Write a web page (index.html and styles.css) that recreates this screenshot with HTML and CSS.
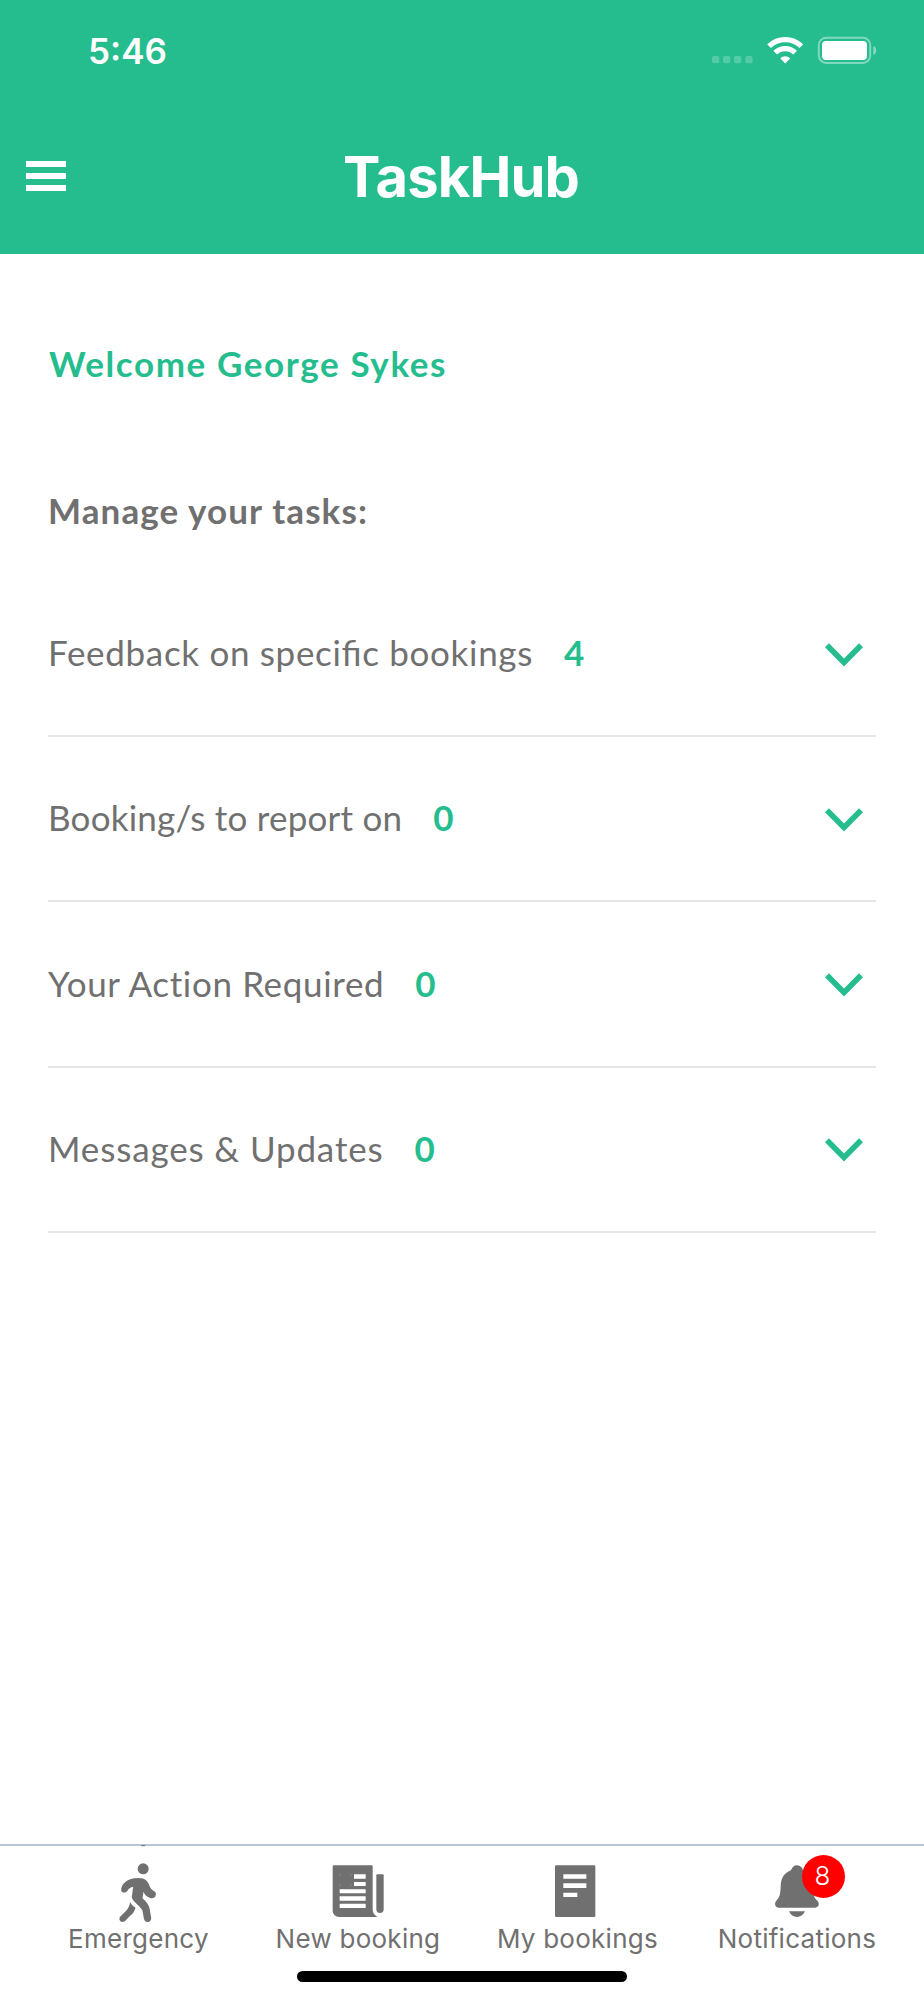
FILE: index.html
```html
<!DOCTYPE html>
<html lang="en">
<head>
<meta charset="utf-8">
<title>TaskHub</title>
<link rel="stylesheet" href="styles.css">
</head>
<body>
<div class="screen">
  <header class="header">
    <div class="status">
      <span class="time">5:46</span>
      <svg class="status-icons" width="166" height="30" viewBox="0 0 166 30">
        <g fill="#fff" fill-opacity=".22">
          <rect x="1" y="20" width="7.3" height="7.3" rx="2"/><rect x="12" y="20" width="7.3" height="7.3" rx="2"/><rect x="23" y="20" width="7.3" height="7.3" rx="2"/><rect x="34.3" y="20" width="7.3" height="7.3" rx="2"/>
        </g>
        <g fill="none" stroke="#fff" stroke-width="5.2">
          <path d="M58 10.2C67 1.3 81.3 1.3 90.4 10.2"/>
          <path d="M64.2 16.6C69.9 11.2 78.5 11.2 84.2 16.6"/>
        </g>
        <path d="M74.2 27.5L69.3 22.5C72 19.4 76.4 19.4 79.2 22.5Z" fill="#fff"/>
        <rect x="107.8" y="1.7" width="51.4" height="25.2" rx="7.5" fill="none" stroke="#fff" stroke-opacity=".42" stroke-width="2"/>
        <rect x="111" y="4.9" width="45" height="19" rx="4" fill="#fff"/>
        <path d="M162.3 10C166.2 11.6 166.2 17.2 162.3 18.8Z" fill="#fff" fill-opacity=".45"/>
      </svg>
    </div>
    <div class="bar">
      <button class="menu" aria-label="Menu"><i></i><i></i><i></i></button>
      <h1 class="title">TaskHub</h1>
    </div>
  </header>
  <main class="content">
    <p class="welcome">Welcome George Sykes</p>
    <h2 class="manage">Manage your tasks:</h2>
    <ul class="tasks">
      <li class="task"><span class="label feedback">Feedback on specific bookings</span><b class="count">4</b><svg class="chev" width="38" height="24" viewBox="0 0 38 24"><path d="M2 2.2L19 19.4L36 2.2"/></svg></li>
      <li class="task"><span class="label reports">Booking/s to report on</span><b class="count">0</b><svg class="chev" width="38" height="24" viewBox="0 0 38 24"><path d="M2 2.2L19 19.4L36 2.2"/></svg></li>
      <li class="task"><span class="label actions">Your Action Required</span><b class="count">0</b><svg class="chev" width="38" height="24" viewBox="0 0 38 24"><path d="M2 2.2L19 19.4L36 2.2"/></svg></li>
      <li class="task"><span class="label messages">Messages &amp; Updates</span><b class="count">0</b><svg class="chev" width="38" height="24" viewBox="0 0 38 24"><path d="M2 2.2L19 19.4L36 2.2"/></svg></li>
    </ul>
  </main>
  <nav class="tabs">
    <a class="tab">
      <svg class="icon" viewBox="205.5 80 180 198">
        <path d="M305 44.500h12v3h-12z"/>
        <circle cx="311" cy="115.500" r="16.500"/>
        <path d="M245 178C245 163 262 143 297 143C316 143 324 152 328 162C332 172 334 178 343 182C349 185 351 190 348 197C345 204 338 205 330 202C322 198 315 193 312 184L309 204C322 216 329 224 331 238L335 262C336 270 330 275 324 275C317 275 314 270 313 264L309 241C306 233 287 218 279 207C276 202 277 198 278 192L281 169C270 171 267 176 264 181C258 190 245 188 245 178Z"/>
        <path d="M272 215C275 222 281 228 288 232C285 243 280 250 272 256L259 270C253 277 243 276 240 268C239 263 241 259 245 256L260 241C267 234 270 226 272 215Z"/>
      </svg>
      <span class="name">Emergency</span>
    </a>
    <a class="tab">
      <svg class="icon" viewBox="204 80 180 198">
        <path d="M222 105H335Q338 105 338 108V236C338 250 346 256 353 260H238C226 260 218 252 218 240V109Q218 105 222 105Z"/>
        <path d="M352 132H368Q371 132 371 135V237A11 11 0 0 1 349 237V135Q349 132 352 132Z"/>
        <path fill="#fff" d="M282 132h35v13h-35zM282 155h35v12h-35zM239 177h78v12h-78zM239 198h78v13h-78zM239 220h78v13h-78z"/>
        <path fill="#8a8a8a" d="M238 132h4v4h-4zM270 132h4v4h-4zM238 162h4v4h-4zM270 162h4v4h-4z"/>
      </svg>
      <span class="name">New booking</span>
    </a>
    <a class="tab">
      <svg class="icon" viewBox="203 80 180 198">
        <rect x="227" y="105" width="121" height="155" rx="4"/>
        <path fill="#fff" d="M252 132h69v13h-69zM252 159h69v14h-69zM252 187h42v13h-42z"/>
      </svg>
      <span class="name">My bookings</span>
    </a>
    <a class="tab">
      <span class="bell">
        <svg class="icon" viewBox="201 80 180 198">
          <path d="M291 105C301 105 307 112 309 120C333 128 340 148 340 170C340 200 344 203 353 212C360 221 355 232 345 232H237C225 232 222 219 229 211C238 202 241 195 242 170C242 148 250 128 273 120C276 111 282 105 291 105Z"/>
          <path d="M267 243H315C310 254 301 260 291 260S272 254 267 243Z"/>
        </svg>
        <span class="badge">8</span>
      </span>
      <span class="name">Notifications</span>
    </a>
  </nav>
  <div class="home"></div>
</div>
</body>
</html>
```
FILE: styles.css
```css
* { box-sizing: border-box; }
body { margin: 0; background: #fff; font-family: Lato, sans-serif; color: #707070; }
.screen { width: 924px; height: 2000px; display: flex; flex-direction: column; overflow: hidden; }

.header { height: 254.4px; background: #25bd8e; color: #fff; font-family: Inter, sans-serif; }
.status { display: flex; justify-content: space-between; height: 100px; padding: 36px 47px 0 88px; }
.time { font-size: 35px; font-weight: 600; line-height: 30px; letter-spacing: 0; }
.bar { display: grid; grid-template-columns: 66px 1fr 66px; }
.menu { border: 0; background: none; padding: 60.5px 0 0 26px; display: flex; flex-direction: column; gap: 6px; }
.menu i { width: 40px; height: 6.3px; background: #fff; }
.title { margin: 42px 0 0; font-size: 56px; line-height: 70px; text-align: center; font-weight: 700; letter-spacing: -.8px; text-indent: -2px; }

.content { flex: 1; padding: 87px 48px 0; }
.welcome, .manage { margin: 0; font-size: 35px; line-height: 44px; font-weight: 700; }
.welcome { color: #25bd8e; letter-spacing: 1.6px; padding-left: 1px; }
.manage { margin-top: 102.5px; letter-spacing: 1.1px; }
.tasks { list-style: none; margin: 40.4px 0 0; padding: 0; }
.task { display: flex; align-items: center; height: 165.1px; padding-bottom: 3px; border-bottom: 2px solid #e6e6e6; }
.label, .count { font-size: 35px; line-height: 44px; }
.feedback { letter-spacing: .68px; font-feature-settings: "liga" 1; }
.reports { letter-spacing: .22px; }
.actions { letter-spacing: .65px; }
.messages { letter-spacing: .85px; }
.count { margin-left: 31px; color: #25bd8e; }
.chev { margin: 4.6px 12.7px 0 auto; fill: none; stroke: #25bd8e; stroke-width: 5.6; }

.tabs { height: 125.5px; display: flex; padding: 11.2px 17.3px 0 28.7px; border-top: 2px solid #b9c5d6; font-family: Inter, sans-serif; }
.tab { flex: 1 1 0; display: flex; flex-direction: column; align-items: center; }
.icon { display: block; width: 60px; height: 66px; fill: #707070; overflow: visible; }
.name { font-size: 26px; line-height: 30px; letter-spacing: .26px; margin-top: 1.6px; white-space: nowrap; }
.bell { position: relative; }
.badge { position: absolute; left: 34.6px; top: -1.5px; width: 43px; height: 43px; border-radius: 50%; background: #f00; color: #fff; font-size: 26px; font-weight: 300; line-height: 42px; text-align: center; text-indent: -1px; }
.home { width: 330px; height: 11px; margin: 2px auto 18px; border-radius: 6px; background: #000; }
```
